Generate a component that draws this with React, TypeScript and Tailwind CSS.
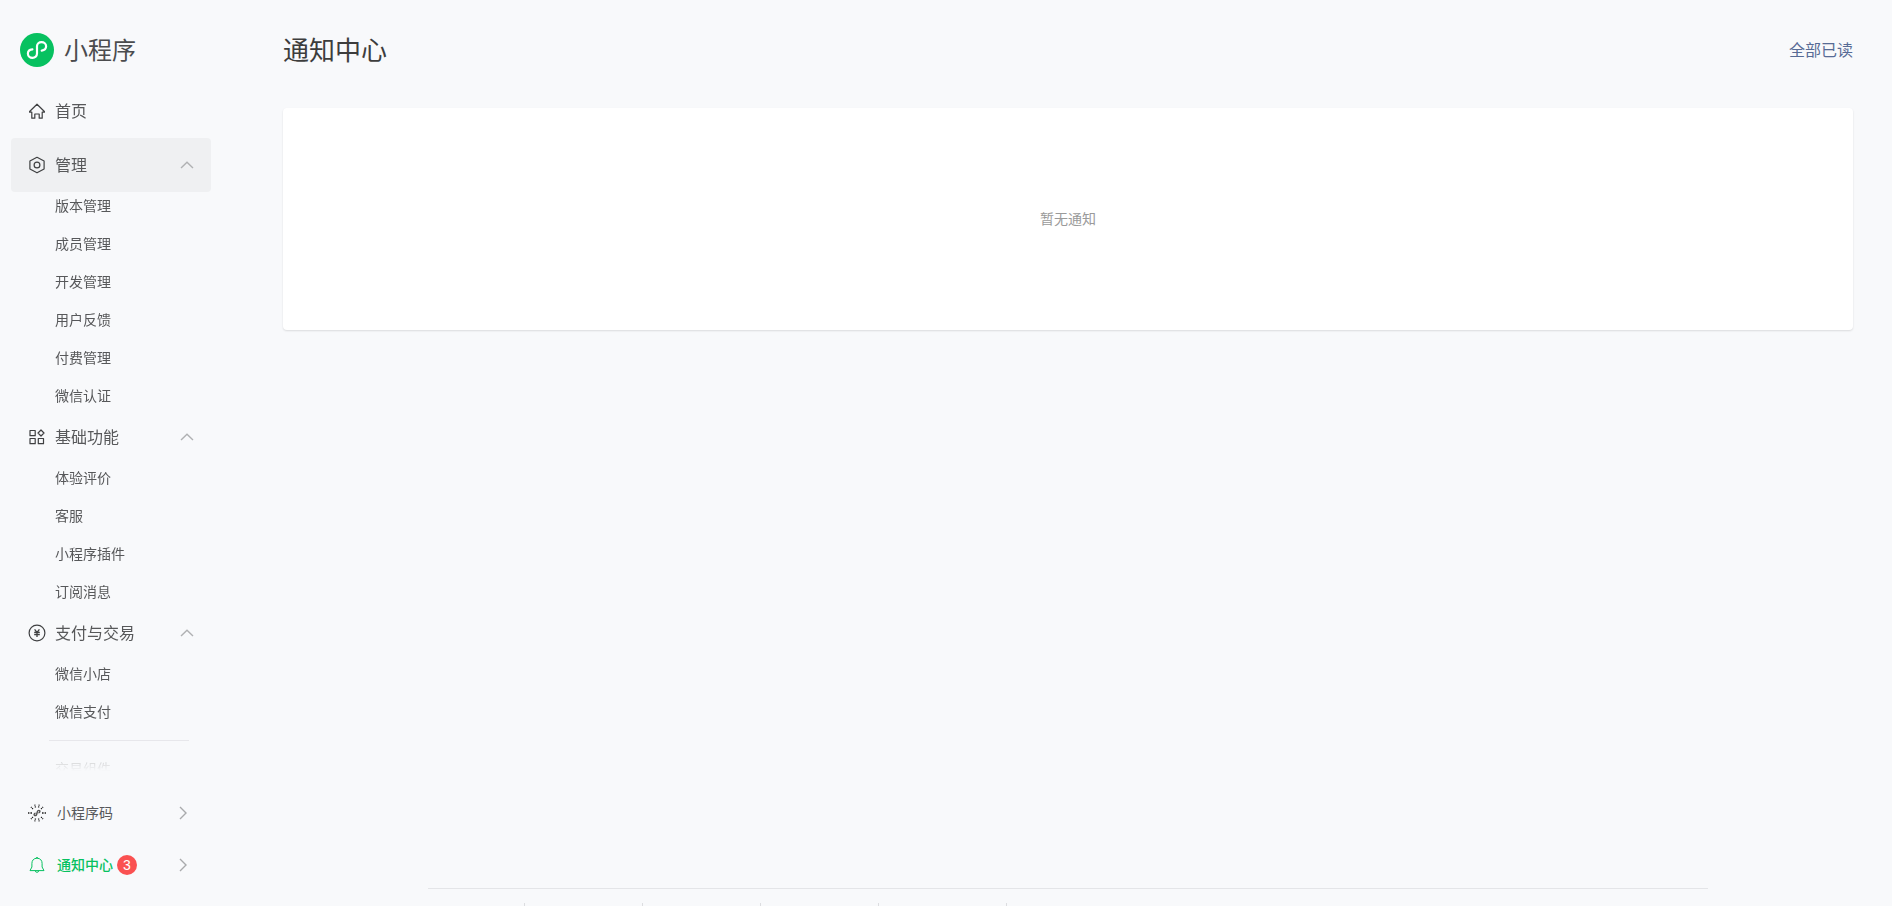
import React, { useState } from 'react';

interface NavGroup {
  key: string;
  label: string;
  icon: React.ReactNode;
  items: string[];
  extra?: string[];
}

const HomeIcon = () => (
  <svg width="18" height="18" viewBox="0 0 18 18" fill="none" stroke="#3f4042" strokeWidth="1.2" strokeLinejoin="round">
    <path d="M9 2.2 L16.4 9.5 V10.2 H14.2 V16.2 H11.2 V12 H6.8 V16.2 H3.8 V10.2 H1.6 V9.5 Z" />
  </svg>
);

const ManageIcon = () => (
  <svg width="18" height="18" viewBox="0 0 18 18" fill="none" stroke="#3f4042" strokeWidth="1.2" strokeLinejoin="round">
    <path d="M9 1.3 L16.1 5 V13 L9 16.8 L1.9 13 V5 Z" />
    <circle cx="9" cy="9" r="2.9" />
  </svg>
);

const FeatureIcon = () => (
  <svg width="18" height="18" viewBox="0 0 18 18" fill="none" stroke="#3f4042" strokeWidth="1.2" strokeLinejoin="round">
    <rect x="2" y="2.5" width="5.2" height="5.2" />
    <rect x="2" y="10.5" width="5.2" height="5.2" />
    <rect x="10.3" y="10.5" width="5.2" height="5.2" />
    <path d="M13 2 L16 5 L13 8 L10 5 Z" />
  </svg>
);

const PayIcon = () => (
  <svg width="18" height="18" viewBox="0 0 18 18" fill="none" stroke="#3f4042" strokeWidth="1.2">
    <circle cx="9" cy="9" r="7.9" />
    <path d="M6.6 5.4 L9 8.4 L11.4 5.4 M9 8.4 V13 M6.2 8.5 H11.8 M6.2 10.6 H11.8" strokeWidth="1.3" />
  </svg>
);

const CodeIcon = () => (
  <svg width="18" height="18" viewBox="0 0 18 18" fill="none" stroke="#1f1f1f">
    {[15, 45, 90, 135, 165, 195, 225, 270, 315, 345].map(deg => (
      <path
        key={deg}
        d={deg % 90 === 0 ? 'M9 4 V2.4 M9 1.4 V0' : 'M9 3.3 V2.1 M9 1.4 V0.4'}
        transform={`rotate(${deg} 9 9)`}
        strokeWidth="1.3"
      />
    ))}
    <path
      d="M7.6 9.1 C5.8 9.3 5.6 11.6 7.2 11.6 C8.5 11.6 8.7 10.6 9 9 C9.3 7.4 9.6 6.4 10.8 6.4 C12.4 6.4 12.2 8.7 10.4 8.9"
      stroke="#555"
      strokeWidth="1.4"
    />
  </svg>
);

const BellIcon = () => (
  <svg width="18" height="18" viewBox="0 0 18 18" fill="none" stroke="currentColor" strokeWidth="1" strokeLinejoin="round">
    <path d="M9 2.2 C5.6 2.2 3.9 4.6 3.9 7.4 V11 L2 14.6 H16 L14.1 11 V7.4 C14.1 4.6 12.4 2.2 9 2.2 Z" />
    <path d="M8.2 2.2 C8.2 1 9.8 1 9.8 2.2 M7.2 14.8 C7.4 16.8 10.6 16.8 10.8 14.8" />
  </svg>
);

const ArrowUp = ({ open }: { open: boolean }) => (
  <svg width="14" height="14" viewBox="0 0 14 14" fill="none" stroke="#b0b1b3" strokeWidth="1.4" className={open ? '' : 'rotate-180'}>
    <path d="M1 10.1 L7 4.2 L13 10.1" />
  </svg>
);

const ArrowRight = () => (
  <svg width="14" height="14" viewBox="0 0 14 14" fill="none" stroke="#a9aaac" strokeWidth="1.4">
    <path d="M4 1 L10 7 L4 13" />
  </svg>
);

const groups: NavGroup[] = [
  {
    key: 'manage',
    label: '管理',
    icon: <ManageIcon />,
    items: ['版本管理', '成员管理', '开发管理', '用户反馈', '付费管理', '微信认证']
  },
  {
    key: 'feature',
    label: '基础功能',
    icon: <FeatureIcon />,
    items: ['体验评价', '客服', '小程序插件', '订阅消息']
  },
  {
    key: 'pay',
    label: '支付与交易',
    icon: <PayIcon />,
    items: ['微信小店', '微信支付'],
    extra: ['交易组件']
  }
];

const SubList = ({ items }: { items: string[] }) => (
  <ul className="flex flex-col gap-2.5">
    {items.map(item => (
      <li key={item}>
        <a href="#" className="block pl-11 text-sm leading-7 hover:text-[#07c160]">{item}</a>
      </li>
    ))}
  </ul>
);

const Sidebar = () => {
  const [closed, setClosed] = useState<string[]>([]);

  const toggle = (key: string) => {
    setClosed(prev => (prev.includes(key) ? prev.filter(k => k !== key) : [...prev, key]));
  };

  return (
    <aside className="flex h-full w-[211px] shrink-0 flex-col pl-[11px] text-[#57585a]">
      <a href="#" className="flex h-[84px] shrink-0 items-center gap-2.5 pl-[9px] pt-4">
        <svg width="34" height="34" viewBox="0 0 34 34" fill="none">
          <circle cx="17" cy="17" r="17" fill="#07c160" />
          <path
            d="M12.4 16.4 C9.8 16.7 7.9 18.3 7.9 20.5 C7.9 23 10 24.8 12.5 24.8 C15 24.8 17 23 17 20.6 V13.3 C17 10.9 19 9.1 21.5 9.1 C24 9.1 26.1 10.9 26.1 13.3 C26.1 15.6 24.3 17.2 21.7 17.6"
            stroke="#fff"
            strokeWidth="2.2"
            strokeLinecap="round"
          />
        </svg>
        <span className="pt-0.5 text-2xl text-[#4b4c4e]">小程序</span>
      </a>

      <nav className="min-h-0 flex-1 overflow-hidden [mask-image:linear-gradient(to_bottom,#000_calc(100%-44px),transparent)]">
        <a href="#" className="flex h-[54px] items-center gap-2 pl-[17px]">
          <HomeIcon />
          <span className="pl-px pt-0.5">首页</span>
        </a>
        {groups.map(g => (
          <div key={g.key}>
            <button
              type="button"
              onClick={() => toggle(g.key)}
              aria-expanded={!closed.includes(g.key)}
              className={`flex h-[54px] w-full items-center gap-2 rounded pl-[17px] pr-[17px] ${g.key === 'manage' ? 'bg-[#eff0f2]' : ''}`}
            >
              {g.icon}
              <span className="flex-1 pl-px pt-0.5 text-left">{g.label}</span>
              <ArrowUp open={!closed.includes(g.key)} />
            </button>
            {!closed.includes(g.key) && (
              <>
                <SubList items={g.items} />
                {g.extra && (
                  <>
                    <hr className="my-3.5 ml-[38px] mr-[22px] border-[#dfe0e3]" />
                    <SubList items={g.extra} />
                  </>
                )}
              </>
            )}
          </div>
        ))}
      </nav>

      <div className="shrink-0 pb-[15px] pt-4 text-sm">
        <a href="#" className="flex h-[52px] items-center pl-[17px] pr-[21px]">
          <CodeIcon />
          <span className="flex-1 pl-[11px]">小程序码</span>
          <ArrowRight />
        </a>
        <a href="#" className="flex h-[52px] items-center pl-[17px] pr-[21px] text-[#07c160]">
          <BellIcon />
          <span className="pl-[11px] font-medium">通知中心</span>
          <span className="ml-1 flex h-5 w-5 items-center justify-center rounded-full bg-[#fa5151] text-sm text-white">3</span>
          <span className="ml-auto"><ArrowRight /></span>
        </a>
      </div>
    </aside>
  );
};

const App: React.FC = () => {
  return (
    <div className="flex h-screen overflow-hidden bg-[#f8f9fb] font-['Liberation_Sans','Noto_Sans_CJK_SC',sans-serif]">
      <Sidebar />
      <main className="flex min-w-0 flex-1 flex-col pl-[72px] pr-[39px]">
        <header className="flex h-[108px] shrink-0 items-center justify-between pb-1.5">
          <h1 className="text-[26px] text-[#3d3d3d]">通知中心</h1>
          <button type="button" className="text-[#576b95]">全部已读</button>
        </header>

        <section className="rounded bg-white py-[101px] text-center text-sm text-[#9a9a9a] shadow-[0_1px_2px_rgba(0,0,0,0.12)]">
          暂无通知
        </section>

        <footer className="mx-auto mt-auto w-full max-w-[1280px] border-t border-[#e4e5e8] pt-3.5">
          <div className="flex h-[3px] divide-x divide-[#dcdde0]">
            <span className="w-[97px]" />
            <span className="w-[118px]" />
            <span className="w-[118px]" />
            <span className="w-[118px]" />
            <span className="w-32" />
            <span className="flex-1" />
          </div>
        </footer>
      </main>
    </div>
  );
};

export default App;
